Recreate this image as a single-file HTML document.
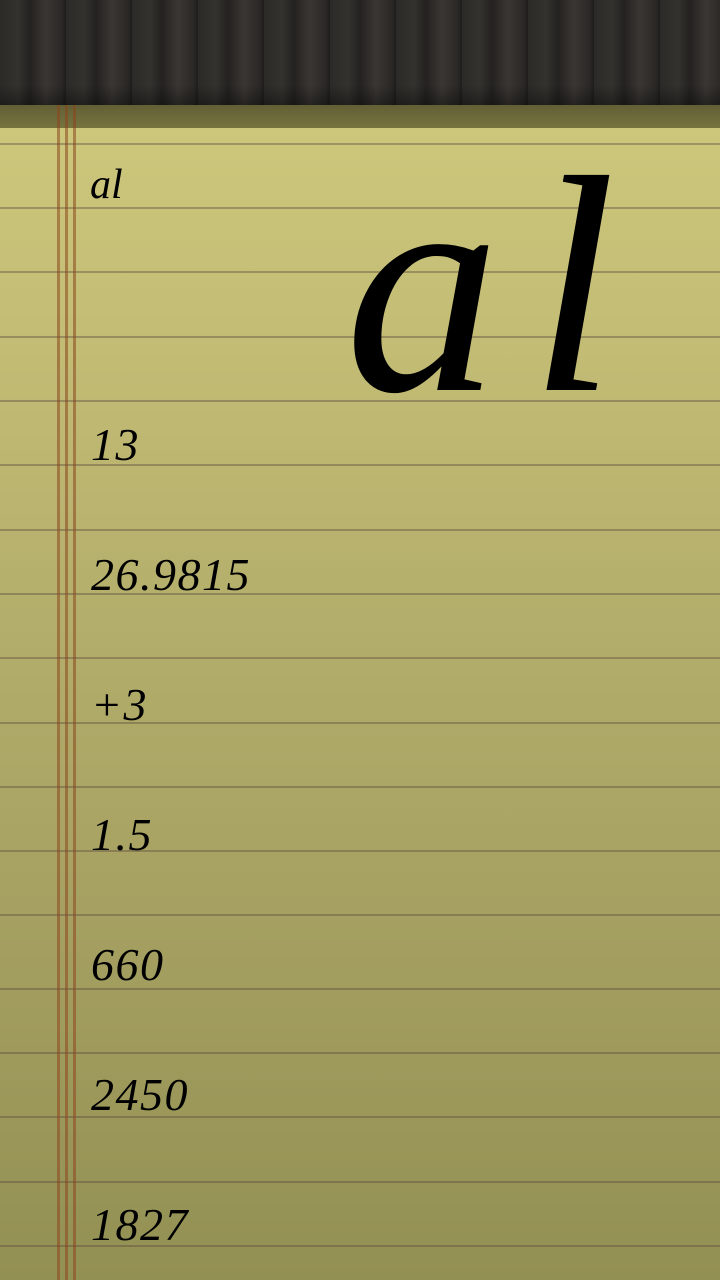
<!DOCTYPE html>
<html><head><meta charset="utf-8"><style>
html,body{margin:0;padding:0}
body{width:720px;height:1280px;position:relative;overflow:hidden;background:linear-gradient(180deg,#cdc77c 128px,#b3ad6b 640px,#939054 1280px);font-family:"Liberation Serif",serif;font-style:italic;color:#000}
.wood{position:absolute;left:0;top:0;width:720px;height:105px;background:repeating-linear-gradient(90deg,#2c2a27 0,#34322e 18px,#242220 30px,#3a3733 46px,#2a2825 62px,#1e1d1b 66px);}
.wood:after{content:"";position:absolute;left:0;right:0;bottom:0;height:20px;background:linear-gradient(180deg,rgba(0,0,0,0),rgba(0,0,0,.35))}
.band{position:absolute;left:0;top:105px;width:720px;height:23px;background:linear-gradient(180deg,#625f35,#77733f)}
.h{position:absolute;left:0;width:720px;height:2px;background:rgba(90,70,60,.4)}
.v{position:absolute;top:105px;bottom:0;width:3px;background:rgba(140,70,30,.55)}
.t{position:absolute;left:91px;font-size:46px;line-height:1;letter-spacing:1.5px}
</style></head><body>
<div class="wood"></div><div class="band"></div>
<div class="h" style="top:143px"></div><div class="h" style="top:207px"></div><div class="h" style="top:271px"></div><div class="h" style="top:336px"></div><div class="h" style="top:400px"></div><div class="h" style="top:464px"></div><div class="h" style="top:529px"></div><div class="h" style="top:593px"></div><div class="h" style="top:657px"></div><div class="h" style="top:722px"></div><div class="h" style="top:786px"></div><div class="h" style="top:850px"></div><div class="h" style="top:914px"></div><div class="h" style="top:988px"></div><div class="h" style="top:1052px"></div><div class="h" style="top:1116px"></div><div class="h" style="top:1181px"></div><div class="h" style="top:1245px"></div>
<div class="v" style="left:57px"></div><div class="v" style="left:65px"></div><div class="v" style="left:73px"></div>
<div class="t" style="top:164px;font-size:42px;left:90px;letter-spacing:0">al</div>
<div style="position:absolute;left:345px;top:132px;font-size:310px;line-height:1;letter-spacing:30px">al</div>
<div class="t" style="top:422px">13</div>
<div class="t" style="top:552px">26.9815</div>
<div class="t" style="top:682px">+3</div>
<div class="t" style="top:812px">1.5</div>
<div class="t" style="top:942px">660</div>
<div class="t" style="top:1072px">2450</div>
<div class="t" style="top:1202px">1827</div>
</body></html>
